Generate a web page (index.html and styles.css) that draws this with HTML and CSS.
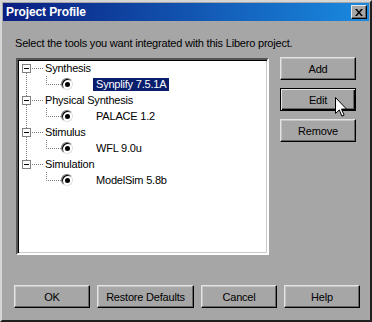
FILE: index.html
```html
<!DOCTYPE html>
<html lang="en">
<head>
  <meta charset="UTF-8" />
  <title>Project Profile</title>
  <link rel="stylesheet" href="styles.css">
</head>
<body>

  <div class="window">
    <div class="titlebar">
      <span class="title">Project Profile</span>
      <button class="close-btn" aria-label="Close">
        <svg width="8" height="7" viewBox="0 0 8 7"><path d="M0 0h2l2 2.5L6 0h2L5 3.5 8 7H6L4 4.5 2 7H0l3-3.5z" fill="#000"/></svg>
      </button>
    </div>

    <p class="intro">Select the tools you want integrated with this Libero project.</p>

    <div class="content">
      <ul class="tree">
        <li>
          <div class="node-row"><span class="expander"></span><span class="branch"></span><span class="label">Synthesis</span></div>
          <div class="leaf-row"><span class="elbow"></span><span class="radio"></span><span class="label selected">Synplify 7.5.1A</span></div>
        </li>
        <li>
          <div class="node-row"><span class="expander"></span><span class="branch"></span><span class="label">Physical Synthesis</span></div>
          <div class="leaf-row"><span class="elbow"></span><span class="radio"></span><span class="label">PALACE 1.2</span></div>
        </li>
        <li>
          <div class="node-row"><span class="expander"></span><span class="branch"></span><span class="label">Stimulus</span></div>
          <div class="leaf-row"><span class="elbow"></span><span class="radio"></span><span class="label">WFL 9.0u</span></div>
        </li>
        <li>
          <div class="node-row"><span class="expander"></span><span class="branch"></span><span class="label">Simulation</span></div>
          <div class="leaf-row"><span class="elbow"></span><span class="radio"></span><span class="label">ModelSim 5.8b</span></div>
        </li>
      </ul>

      <div class="side-buttons">
        <button class="btn">Add</button>
        <button class="btn default">Edit</button>
        <button class="btn">Remove</button>
      </div>
    </div>

    <div class="footer">
      <button class="btn">OK</button>
      <button class="btn wide">Restore Defaults</button>
      <button class="btn">Cancel</button>
      <button class="btn">Help</button>
    </div>

    <svg class="cursor" width="12" height="20" viewBox="0 0 12 20">
      <path d="M0.5 0.5v16l3.8-3.6 2.6 6.2 2.2-1-2.6-6h5z" fill="#fff" stroke="#000" stroke-width="1"/>
    </svg>
  </div>

</body>
</html>
```

FILE: styles.css
```css
body {
  margin: 0;
  font-family: "Liberation Sans", Arial, sans-serif;
  font-size: 11px;
  letter-spacing: -0.2px;
  color: #000;
}
.window {
  position: relative;
  width: 372px;
  height: 322px;
  box-sizing: border-box;
  display: flex;
  flex-direction: column;
  padding: 1px;
  background-color: #a6a6a6;
  border: 2px solid;
  border-color: #d6d6d6 #202020 #202020 #d6d6d6;
}
.titlebar {
  display: flex;
  align-items: center;
  justify-content: space-between;
  height: 18px;
  padding: 0 2px 0 3px;
  background: linear-gradient(to right, #0a1e80, #1a8ae0);
  color: white;
}
.title {
  font-weight: bold;
  font-size: 12px;
  letter-spacing: -0.1px;
}
.close-btn {
  width: 16px;
  height: 14px;
  padding: 0;
  display: flex;
  align-items: center;
  justify-content: center;
  background-color: #a6a6a6;
  border: 1px solid;
  border-color: #e8e8e8 #000 #000 #e8e8e8;
  box-shadow: inset -1px -1px #666;
}
.intro {
  margin: 16px 0 8px 12px;
  line-height: 13px;
}
.content {
  display: flex;
  justify-content: space-between;
  padding: 0 13px 0 12px;
}
.tree {
  list-style: none;
  margin: 0;
  margin-left: 1px;
  padding: 0 0 0 4px;
  width: 245px;
  height: 193px;
  background: #fff repeating-linear-gradient(#808080 0 1px, transparent 1px 2px) 8px 13px / 1px 87px no-repeat;
  border: 2px solid;
  border-color: #555 #fff #fff #555;
  box-shadow: inset 1px 1px #000, inset -1px -1px #c8c8c8;
}
.node-row,
.leaf-row {
  display: flex;
  align-items: center;
  height: 16px;
}
.expander {
  position: relative;
  width: 9px;
  height: 9px;
  box-sizing: border-box;
  border: 1px solid #808080;
  background-color: #fff;
}
.expander::after {
  content: "";
  position: absolute;
  left: 1px;
  top: 3px;
  width: 5px;
  height: 1px;
  background-color: #000;
}
.branch {
  width: 12px;
  height: 16px;
  background: repeating-linear-gradient(to right, #808080 0 1px, transparent 1px 2px) 1px 8px / 100% 1px no-repeat;
}
.label {
  padding: 0 2px;
  line-height: 13px;
  white-space: nowrap;
}
.elbow {
  width: 15px;
  height: 16px;
  margin-left: 24px;
  background:
    repeating-linear-gradient(#808080 0 1px, transparent 1px 2px) 0 0 / 1px 8px no-repeat,
    repeating-linear-gradient(to right, #808080 0 1px, transparent 1px 2px) 0 8px / 100% 1px no-repeat;
}
.radio {
  position: relative;
  width: 12px;
  height: 12px;
  box-sizing: border-box;
  border-radius: 50%;
  border: 1px solid;
  border-color: #707070 #e0e0e0 #e0e0e0 #707070;
  background-color: #fff;
  box-shadow: inset 1px 1px #000;
}
.radio::after {
  content: "";
  position: absolute;
  left: 2.5px;
  top: 2.5px;
  width: 5px;
  height: 5px;
  border-radius: 50%;
  background-color: #000;
}
.leaf-row .label {
  margin-left: 20px;
  padding: 0 3px;
}
.label.selected {
  background-color: #0a1e6e;
  color: white;
}
.side-buttons {
  display: flex;
  flex-direction: column;
  gap: 8px;
  margin-top: -1px;
}
.btn {
  width: 76px;
  height: 23px;
  padding: 0;
  font-family: "Liberation Sans", Arial, sans-serif;
  font-size: 11px;
  letter-spacing: -0.2px;
  color: #000;
  background-color: #a6a6a6;
  border: 1px solid;
  border-color: #e4e4e4 #000 #000 #e4e4e4;
  box-shadow: inset -1px -1px #666, inset 1px 1px #c4c4c4;
}
.btn.default {
  border: 1px solid #000;
  box-shadow: inset 1px 1px #e4e4e4, inset -1px -1px #000, inset -2px -2px #666;
}
.btn.wide {
  width: 97px;
}
.footer {
  display: flex;
  gap: 7px;
  margin-top: auto;
  padding: 0 0 11px 11px;
}
.cursor {
  position: absolute;
  left: 333px;
  top: 95px;
}
```
